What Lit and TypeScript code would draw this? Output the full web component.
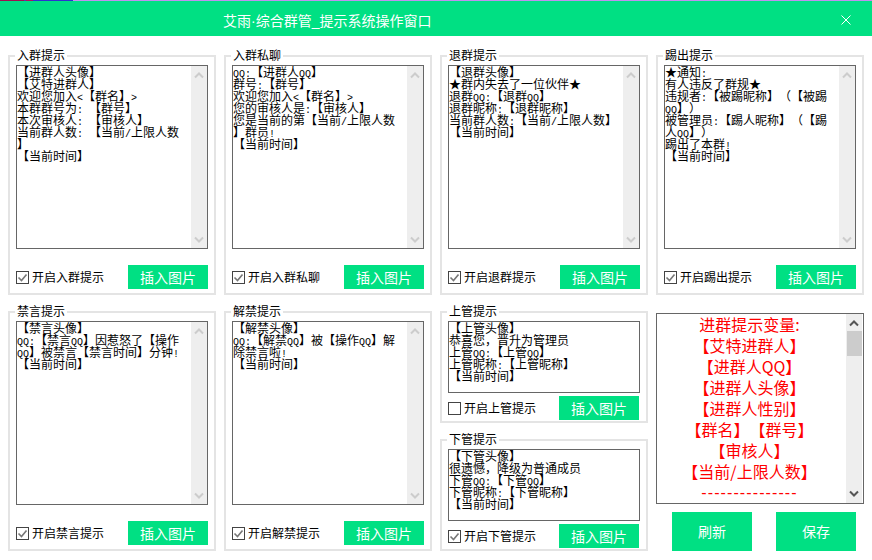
import { LitElement, html, css, svg } from "lit";
import { customElement, property } from "lit/decorators.js";

const chevron = (up: boolean) => html`<svg class="chev" viewBox="0 0 10 8" width="10" height="8">
  ${svg`<path d=${up ? "M1 6.5 L5 2.5 L9 6.5" : "M1 1.5 L5 5.5 L9 1.5"} fill="none" stroke="currentColor" stroke-width="2"/>`}
</svg>`;

/** Bitmap-style narrow Latin: wraps ASCII runs so they take half a CJK cell. */
const mixed = (line: string) =>
  line.split(/([\x20-\x7e]+)/).map((part, i) => (i % 2 ? html`<span class="asc">${part}</span>` : part));

@customElement("text-box")
class TextBox extends LitElement {
  @property({ type: Array }) lines: string[] = [];
  @property({ type: Boolean }) bar = true;
  static styles = css`
    :host { display: flex; box-sizing: border-box; flex: none; border: 1px solid #666; background: #fff; overflow: hidden; }
    .body { flex: 1; min-width: 0; font: 12px/12px "Noto Sans CJK SC", sans-serif; color: #000; white-space: pre; text-spacing-trim: space-all; }
    .line { height: 12px; }
    .asc { font: 10px/12px "Liberation Mono", monospace; }
    .bar { flex: none; width: 16px; background: #eee; color: #ccc; display: flex; flex-direction: column; justify-content: space-between; align-items: center; padding: 5px 0 4px; box-sizing: border-box; }
    .chev { display: block; }
  `;
  render() {
    return html`<div class="body">${this.lines.map((l) => html`<div class="line">${mixed(l)}</div>`)}</div>
      ${this.bar ? html`<div class="bar">${chevron(true)}${chevron(false)}</div>` : ""}`;
  }
}

@customElement("prompt-panel")
class PromptPanel extends LitElement {
  @property() heading = "";
  @property() toggle = "";
  @property({ type: Array }) lines: string[] = [];
  @property({ type: Boolean }) checked = true;
  @property({ type: Boolean, reflect: true }) mini = false;
  static styles = css`
    :host { display: block; position: relative; box-sizing: border-box; border: 2px solid #e4e4e4; height: 240px; font: 12px/12px "Noto Sans CJK SC", sans-serif; color: #000; }
    :host([mini]) { height: 112px; }
    .legend { position: absolute; left: 5px; top: -8px; padding: 0 2px; background: #fff; line-height: 12px; }
    .wrap { display: flex; flex-direction: column; height: 100%; box-sizing: border-box; padding: 8px 6px 4px; justify-content: space-between; }
    :host([mini]) .wrap { padding-bottom: 1px; }
    text-box { height: 184px; }
    :host([mini]) text-box { height: 72px; }
    .foot { display: flex; justify-content: space-between; align-items: center; height: 24px; }
    :host([mini]) .foot { padding-right: 1px; }
    .check { display: flex; align-items: center; gap: 3px; }
    .box { display: block; flex: none; }
    .btn { width: 80px; height: 24px; background: #00e083; color: #fff; font-size: 14px; line-height: 24px; text-align: center; }
  `;
  render() {
    return html`<div class="legend">${this.heading}</div>
      <div class="wrap">
        <text-box .lines=${this.lines} .bar=${!this.mini}></text-box>
        <div class="foot">
          <div class="check">
            <svg class="box" width="13" height="13" viewBox="0 0 13 13">
              <rect x=".5" y=".5" width="12" height="12" fill="#fff" stroke="#444"/>
              ${this.checked ? svg`<path d="M2.5 6.5 L5.5 9.5 L10.5 3.5" fill="none" stroke="#777" stroke-width="1.6"/>` : ""}
            </svg>
            <span>${this.toggle}</span>
          </div>
          <div class="btn">插入图片</div>
        </div>
      </div>`;
  }
}

const T = "【当前时间】";
const VARS = ["进群提示变量:", "【艾特进群人】", "【进群人QQ】", "【进群人头像】", "【进群人性别】", "【群名】【群号】", "【审核人】", "【当前/上限人数】"];

@customElement("app-root")
class AppRoot extends LitElement {
  static styles = css`
    :host { display: block; width: 872px; height: 560px; background: #fff; overflow: hidden; font-family: "Noto Sans CJK SC", sans-serif; }
    .strip { display: flex; height: 1px; background: #c090f0; }
    .s1 { width: 24px; background: #a01050; }
    .s2 { width: 2px; background: #5a30b0; }
    .s3 { width: 7px; background: #b01060; }
    .s4 { width: 40px; background: #3030d0; }
    .head { display: flex; align-items: center; justify-content: space-between; height: 35px; box-sizing: border-box; padding: 3px 21px 0 223px; background: #00e083; color: #fff; font-size: 14px; }
    .lat { font-family: "Liberation Sans", sans-serif; }
    .x { display: block; }
    .grid { display: grid; grid-template-columns: repeat(4, 208px); grid-auto-rows: 240px; gap: 16px 8px; padding: 19px 8px 0; }
    .stack { display: flex; flex-direction: column; gap: 16px; }
    .side { display: flex; flex-direction: column; padding-top: 2px; }
    .list { display: flex; box-sizing: border-box; height: 192px; border: 1px solid #666; overflow: hidden; }
    .vars { flex: 1; min-width: 0; padding-right: 4px; color: #f00; font-size: 16px; line-height: 21px; text-align: center; white-space: pre; text-spacing-trim: space-all; }
    .dash { font-family: "Liberation Sans", sans-serif; letter-spacing: 1.1px; }
    .track { flex: none; width: 16px; margin-right: 1px; background: #eee; color: #555; display: flex; flex-direction: column; align-items: center; padding: 5px 0 5px; box-sizing: border-box; }
    .thumb { width: 15px; height: 25px; margin: 4px 0 auto; background: #ccc; }
    .actions { display: flex; justify-content: space-between; padding: 8px 8px 0 16px; }
    .act { width: 80px; height: 39px; line-height: 39px; text-align: center; background: #00e083; color: #fff; font-size: 14px; }
    .chev { display: block; }
  `;
  render() {
    return html`
      <div class="strip"><i class="s1"></i><i class="s2"></i><i class="s3"></i><i class="s4"></i></div>
      <header class="head">
        <span>艾雨<span class="lat">·</span>综合群管<span class="lat">_</span>提示系统操作窗口</span>
        <svg class="x" width="10" height="10" viewBox="0 0 10 10"><path d="M.5.5 9.5 9.5M9.5.5.5 9.5" stroke="#fff" fill="none"/></svg>
      </header>
      <main class="grid">
        <prompt-panel heading="入群提示" toggle="开启入群提示" .lines=${["【进群人头像】", "【艾特进群人】", "欢迎您加入<【群名】>", "本群群号为: 【群号】", "本次审核人: 【审核人】", "当前群人数: 【当前/上限人数", "】", T]}></prompt-panel>
        <prompt-panel heading="入群私聊" toggle="开启入群私聊" .lines=${["QQ:【进群人QQ】", "群号:【群号】", "欢迎您加入<【群名】>", "您的审核人是:【审核人】", "您是当前的第【当前/上限人数", "】群员!", T]}></prompt-panel>
        <prompt-panel heading="退群提示" toggle="开启退群提示" .lines=${["【退群头像】", "★群内失去了一位伙伴★", "退群QQ:【退群QQ】", "退群昵称:【退群昵称】", "当前群人数:【当前/上限人数】", T]}></prompt-panel>
        <prompt-panel heading="踢出提示" toggle="开启踢出提示" .lines=${["★通知:", "有人违反了群规★", "违规者:【被踢昵称】（【被踢", "QQ】）", "被管理员:【踢人昵称】（【踢", "人QQ】）", "踢出了本群!", T]}></prompt-panel>
        <prompt-panel heading="禁言提示" toggle="开启禁言提示" .lines=${["【禁言头像】", "QQ:【禁言QQ】因惹怒了【操作", "QQ】被禁言【禁言时间】分钟!", T]}></prompt-panel>
        <prompt-panel heading="解禁提示" toggle="开启解禁提示" .lines=${["【解禁头像】", "QQ:【解禁QQ】被【操作QQ】解", "除禁言啦!", T]}></prompt-panel>
        <div class="stack">
          <prompt-panel mini heading="上管提示" toggle="开启上管提示" .checked=${false} .lines=${["【上管头像】", "恭喜您，晋升为管理员", "上管QQ:【上管QQ】", "上管昵称:【上管昵称】", T]}></prompt-panel>
          <prompt-panel mini heading="下管提示" toggle="开启下管提示" .lines=${["【下管头像】", "很遗憾，降级为普通成员", "下管QQ:【下管QQ】", "下管昵称:【下管昵称】", T]}></prompt-panel>
        </div>
        <div class="side">
          <div class="list">
            <div class="vars">${VARS.map((v) => html`<div>${v}</div>`)}<div class="dash">---------------</div></div>
            <div class="track">${chevron(true)}<div class="thumb"></div>${chevron(false)}</div>
          </div>
          <div class="actions"><div class="act">刷新</div><div class="act">保存</div></div>
        </div>
      </main>`;
  }
}
